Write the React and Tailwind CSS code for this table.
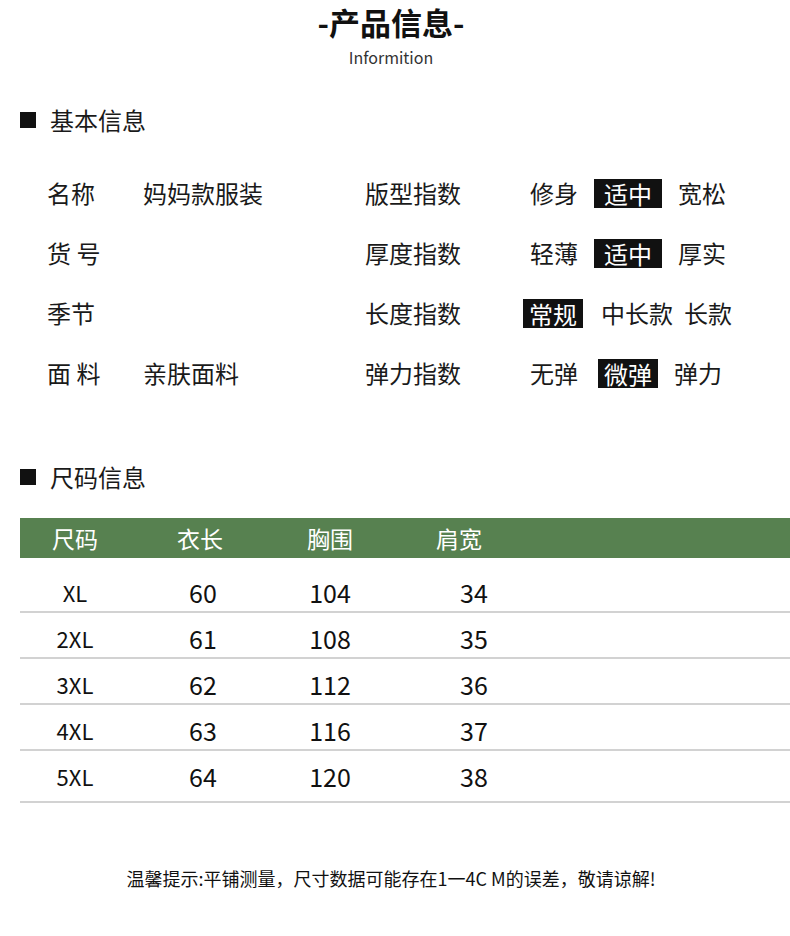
import React from 'react';

const font = "font-['Noto_Sans_CJK_SC','Noto_Sans',sans-serif]";

const basicRows = [
  {
    label: '名称', value: '妈妈款服装', index: '版型指数',
    options: [{ t: '修身' }, { t: '适中', on: true, pad: 'px-[10px]' }, { t: '宽松' }],
  },
  {
    label: '货 号', value: '', index: '厚度指数',
    options: [{ t: '轻薄' }, { t: '适中', on: true, pad: 'px-[10px]' }, { t: '厚实' }],
  },
  {
    label: '季节', value: '', index: '长度指数', shift: '-ml-[7px] gap-[11px]',
    options: [{ t: '常规', on: true, pad: 'px-[6px] mr-[7px]' }, { t: '中长款' }, { t: '长款' }],
  },
  {
    label: '面 料', value: '亲肤面料', index: '弹力指数',
    options: [{ t: '无弹' }, { t: '微弹', on: true, pad: 'px-[6px] ml-[4px]' }, { t: '弹力' }],
  },
];

const sizes = [
  ['XL', '60', '104', '34'],
  ['2XL', '61', '108', '35'],
  ['3XL', '62', '112', '36'],
  ['4XL', '63', '116', '37'],
  ['5XL', '64', '120', '38'],
];

const rowStyles = [
  'h-[55px] pt-[21px]',
  'h-[46px] pt-[12px]',
  'h-[46px] pt-[12px]',
  'h-[46px] pt-[12px]',
  'h-[52px] pt-[12px]',
];

const cols = ['w-[110px]', 'w-[146px]', 'w-[108px]', 'w-[180px]'];

const SectionTitle = ({ children, className }) => (
  <div className={`flex items-center h-[32px] pl-[20px] ${className}`}>
    <span className="w-[16px] h-[16px] bg-[#111]" />
    <span className="ml-[14px] text-[24px] leading-[32px] text-[#1a1a1a]">{children}</span>
  </div>
);

export default function App() {
  return (
    <div className={`w-[790px] bg-white ${font} text-[#1a1a1a] pb-[40px]`}>
      <div className="mt-[2px] pr-[8px] text-center text-[31px] leading-[40px] font-bold text-[#111]">-产品信息-</div>
      <div className="mt-[5px] pr-[8px] text-center text-[16px] leading-[20px] text-[#333]">Informition</div>

      <SectionTitle className="mt-[37px]">基本信息</SectionTitle>

      <div className="mt-[27px] flex flex-col">
        {basicRows.map((r) => (
          <div key={r.index} className="flex items-center h-[60px] pl-[47px] text-[24px] leading-[30px]">
            <span className="w-[96px] whitespace-pre">{r.label}</span>
            <span className="w-[222px]">{r.value}</span>
            <span className="w-[165px]">{r.index}</span>
            <div className={`flex items-center ${r.shift || 'gap-[16px]'}`}>
              {r.options.map((o, i) =>
                o.on ? (
                  <span key={i} className={`bg-[#111] text-white h-[29px] leading-[29px] ${o.pad}`}>{o.t}</span>
                ) : (
                  <span key={i}>{o.t}</span>
                )
              )}
            </div>
          </div>
        ))}
      </div>

      <SectionTitle className="mt-[58px]">尺码信息</SectionTitle>

      <div className="mt-[25px] ml-[20px]">
        <div className="flex items-center h-[40px] bg-[#578150] text-white text-[23px] leading-[30px]">
          <span className={`${cols[0]} text-center`}>尺码</span>
          <span className={`${cols[1]} text-center pr-[6px]`}>衣长</span>
          <span className={`${cols[2]} text-center`}>胸围</span>
          <span className={`${cols[3]} text-center pr-[30px]`}>肩宽</span>
        </div>
        {sizes.map((s, i) => (
          <div key={s[0]} className={`flex border-b-2 border-[#d2d2d2] text-[25px] leading-[26px] text-[#111] ${rowStyles[i]}`}>
            {s.map((v, j) => (
              <span key={j} className={`${cols[j]} text-center ${j === 0 ? 'text-[22px]' : ''}`}>{v}</span>
            ))}
          </div>
        ))}
      </div>

      <div className="mt-[63px] pr-[8px] text-center text-[18px] leading-[24px] text-[#111]">
        温馨提示:平铺测量，尺寸数据可能存在1一4C M的误差，敬请谅解!
      </div>
    </div>
  );
}
